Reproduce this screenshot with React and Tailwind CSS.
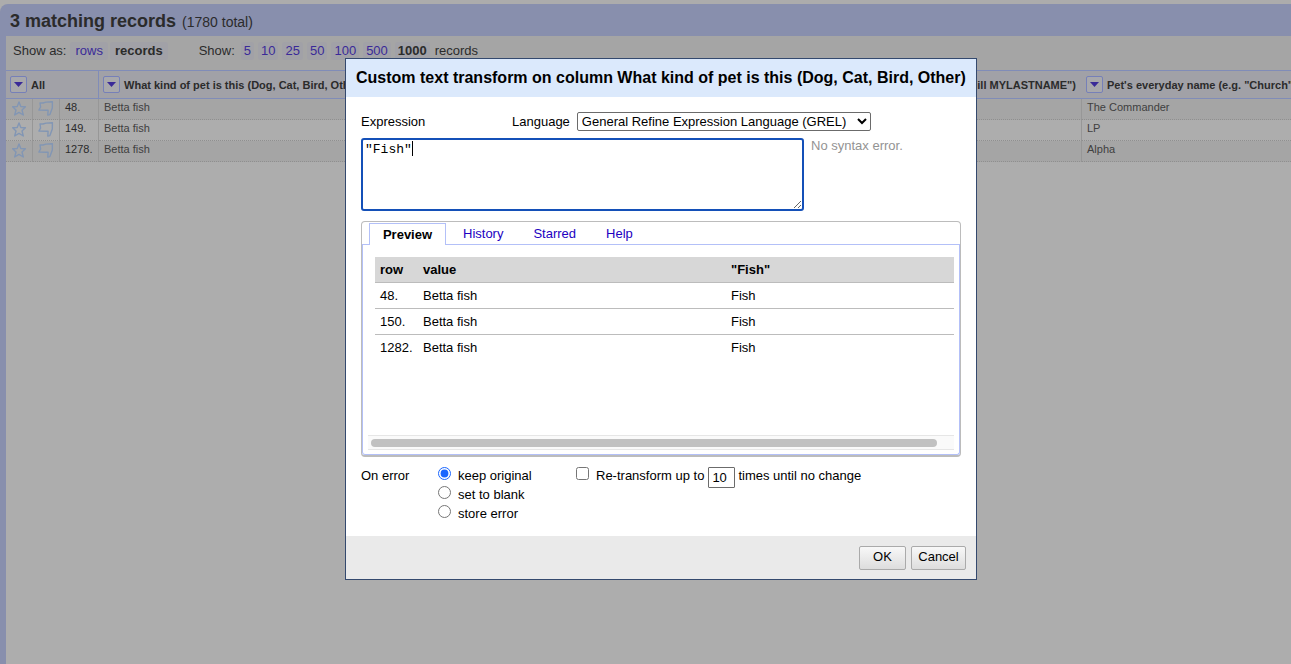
import React from "react";

const sizes = ["5", "10", "25", "50", "100", "500"];

const records = [
  { index: "48.", kind: "Betta fish", name: "The Commander", bg: "bg-[#a5a5a5]" },
  { index: "149.", kind: "Betta fish", name: "LP", bg: "bg-[#adadad]" },
  { index: "1278.", kind: "Betta fish", name: "Alpha", bg: "bg-[#a5a5a5]" },
];

const preview = [
  { row: "48.", value: "Betta fish", result: "Fish" },
  { row: "150.", value: "Betta fish", result: "Fish" },
  { row: "1282.", value: "Betta fish", result: "Fish" },
];

function MenuButton({ label }) {
  return (
    <button
      type="button"
      aria-label={label}
      className="flex h-[17px] w-[17px] shrink-0 items-center justify-center rounded-[2px] border border-[#7680b8] bg-[#a8a8ac]"
    >
      <svg width="9" height="5" viewBox="0 0 9 5">
        <path d="M0 0H9L4.5 5Z" fill="#3a2a98" />
      </svg>
    </button>
  );
}

function StarIcon() {
  return (
    <svg width="15" height="15" viewBox="0 0 15 15" fill="none" stroke="#8296b4" strokeWidth="1.4" strokeLinejoin="round">
      <path d="M7 1L8.8 5.6L13.4 5.8L10 9L11.3 14L7 11.4L2.7 14L4 9L.7 5.8L5.2 5.6Z" />
    </svg>
  );
}

function FlagIcon() {
  return (
    <svg width="16" height="15" viewBox="0 0 16 15" fill="none" stroke="#8296b4" strokeWidth="1.4" strokeLinejoin="round">
      <path d="M2 2L5 2L8 1.1L14.4 .8L14.3 7L11.9 13.6L9.8 14L10.1 9.2L.9 9.1L2.6 6Z" />
    </svg>
  );
}

function HeadCell({ label, children }) {
  return (
    <div className="flex h-[27px] items-center gap-1 pl-1">
      <MenuButton label={label} />
      <span className="whitespace-nowrap pt-[2px]">{children}</span>
    </div>
  );
}

function RecordsPage() {
  const head = "border-y border-[#808cb8] p-0 text-left font-bold";
  const cell = "h-[21px] border-b border-[#8f8f8f] p-0 [border-bottom-style:dotted]";
  const divided = "border-r border-r-[#979797]";
  return (
    <main className="min-h-screen pt-1">
      <div className="min-h-[660px] rounded-tl-lg bg-[#888fad] pl-[6px]">
        <h1 className="flex h-8 items-baseline gap-[6px] pl-1 text-[18px] font-bold leading-[34px]">
          3 matching records <span className="text-[14px] font-normal">(1780 total)</span>
        </h1>
        <div className="min-h-[628px] bg-[#adadad]">
          <div className="flex h-[34px] items-start bg-[#a5a5a5] pl-[7px] pt-[6px] text-[13px] leading-[18px]">
            <span>Show as:</span>
            <a href="#rows" className="ml-1 rounded-[3px] bg-[#a1a1a7] px-[5px] text-[#3a2a98]">rows</a>
            <span className="ml-[2px] rounded-[3px] bg-[#a1a1a7] px-[5px] font-bold">records</span>
            <span className="ml-[31px]">Show:</span>
            <div className="ml-[6px] flex gap-1">
              {sizes.map((n) => (
                <a key={n} href="#size" className="rounded-[3px] bg-[#a1a1a7] px-[3px] text-[#3a2a98]">{n}</a>
              ))}
              <span className="rounded-[3px] bg-[#a1a1a7] px-[3px] font-bold">1000</span>
            </div>
            <span className="ml-[5px]">records</span>
          </div>
          <table className="w-full table-fixed border-separate border-spacing-0 text-[11px] leading-[13px]">
            <colgroup>
              <col className="w-[27px]" />
              <col className="w-[27px]" />
              <col className="w-[39px]" />
              <col className="w-[290px]" />
              <col />
              <col className="w-[209px]" />
            </colgroup>
            <thead className="bg-[#a1a1a7]">
              <tr>
                <th colSpan={3} className={`${head} border-r`}><HeadCell label="All menu">All</HeadCell></th>
                <th className={`${head} overflow-hidden border-r`}>
                  <HeadCell label="Pet kind menu">What kind of pet is this (Dog, Cat, Bird, Other)</HeadCell>
                </th>
                <th className="overflow-hidden whitespace-nowrap border-y border-[#808cb8] pb-0 pl-0 pr-[6px] pt-[2px] text-right font-bold">
                  ill MYLASTNAME")
                </th>
                <th className={`${head} overflow-hidden`}>
                  <HeadCell label="Everyday name menu">Pet's everyday name (e.g. "Church"</HeadCell>
                </th>
              </tr>
            </thead>
            <tbody>
              {records.map((r) => (
                <tr key={r.index} className={r.bg}>
                  <td className={`${cell} ${divided}`}>
                    <div className="flex justify-center pb-px"><StarIcon /></div>
                  </td>
                  <td className={`${cell} ${divided}`}>
                    <div className="flex justify-center pb-px"><FlagIcon /></div>
                  </td>
                  <td className={`${cell} ${divided}`}>
                    <div className="pb-[3px] pl-[5px]">{r.index}</div>
                  </td>
                  <td className={cell}><div className="pb-[3px] pl-[5px] text-[#404040]">{r.kind}</div></td>
                  <td className={`${cell} ${divided}`} />
                  <td className={cell}><div className="pb-[3px] pl-[5px] text-[#404040]">{r.name}</div></td>
                </tr>
              ))}
            </tbody>
          </table>
        </div>
      </div>
    </main>
  );
}

function TransformDialog() {
  const button =
    "h-6 rounded-[2px] border border-[#aaaaaa] bg-gradient-to-b from-[#f8f8f8] to-[#dddddd] pb-[2px] text-[13px] leading-5";
  const line = "h-[26px] border-b border-[#bcbcbc] p-0 pl-[5px]";
  return (
    <div className="fixed inset-0 flex items-start justify-center pl-[31px] pt-[58px]">
      <section
        role="dialog"
        aria-labelledby="dialog-title"
        className="w-[632px] border border-[#34496e] bg-white text-[13px] leading-[19px] text-black"
      >
        <h2 id="dialog-title" className="whitespace-nowrap bg-[#dbe9fc] px-[10px] text-[16px] font-bold leading-[38px]">
          Custom text transform on column What kind of pet is this (Dog, Cat, Bird, Other)
        </h2>
        <div className="px-[15px] pb-[13px] pt-[15px]">
          <div className="flex items-center">
            <label htmlFor="expression" className="w-[151px]">Expression</label>
            <label htmlFor="language">Language</label>
            <select
              id="language"
              defaultValue="grel"
              className="ml-[7px] h-[19px] w-[294px] rounded-[2px] border border-[#6b6b6b] bg-white text-[13px] leading-4"
            >
              <option value="grel">General Refine Expression Language (GREL)</option>
            </select>
          </div>
          <div className="mt-[7px] flex items-start gap-[7px]">
            <div className="relative">
              <textarea
                id="expression"
                spellCheck={false}
                defaultValue={'"Fish"'}
                className="block h-[73px] w-[443px] rounded-[3px] border-2 border-[#1450b8] px-[2px] py-[2px] font-['Liberation_Mono',monospace] text-[13px] leading-4 caret-transparent outline-none"
              />
              <span aria-hidden="true" className="absolute left-[51px] top-[3px] h-[15px] w-px bg-black" />
            </div>
            <div className="-mt-[2px] text-[#939393]">No syntax error.</div>
          </div>
          <div className="mt-[10px] rounded-[4px] border border-b-2 border-[#bcbcbc]">
            <div className="flex h-[23px] items-end border-b border-[#b3c0f8] pl-[7px]" role="tablist">
              <button type="button" role="tab" aria-selected="true" className="-mb-px h-[22px] w-[77px] border border-b-0 border-[#b3c0f8] bg-white font-bold leading-[19px]">
                Preview
              </button>
              <div className="ml-[17px] flex gap-[30px] pb-px text-[#2200c1]">
                <a href="#history" role="tab">History</a>
                <a href="#starred" role="tab">Starred</a>
                <a href="#help" role="tab">Help</a>
              </div>
            </div>
            <div className="flex h-[210px] flex-col justify-between rounded-b-[3px] border-x border-b border-[#b3c0f8] px-[5px] pb-1 pt-3">
              <div className="pl-[7px]">
                <table className="w-full table-fixed border-separate border-spacing-0 text-left">
                  <colgroup>
                    <col className="w-[43px]" />
                    <col className="w-[308px]" />
                    <col />
                  </colgroup>
                  <thead>
                    <tr className="bg-[#d7d7d7]">
                      <th className={line}>row</th>
                      <th className={line}>value</th>
                      <th className={line}>"Fish"</th>
                    </tr>
                  </thead>
                  <tbody className="[&>tr:last-child>td]:border-transparent">
                    {preview.map((p) => (
                      <tr key={p.row}>
                        <td className={line}>{p.row}</td>
                        <td className={line}>{p.value}</td>
                        <td className={line}>{p.result}</td>
                      </tr>
                    ))}
                  </tbody>
                </table>
              </div>
              <div className="flex h-[15px] items-center border-y border-[#e6e6e6] bg-[#fafafa] pl-[3px] pr-[17px]">
                <div className="h-2 w-full rounded-full bg-[#c1c1c1]" />
              </div>
            </div>
          </div>
          <div className="mt-[9px] flex items-start">
            <span className="w-[77px]" id="on-error">On error</span>
            <div role="radiogroup" aria-labelledby="on-error" className="w-[138px]">
              {["keep original", "set to blank", "store error"].map((label, i) => (
                <label key={label} className="flex items-start gap-[7px]">
                  <input type="radio" name="on-error" defaultChecked={i === 0} className="mt-px h-[13px] w-[13px] accent-[#1a66ff]" />
                  {label}
                </label>
              ))}
            </div>
            <input id="repeat" type="checkbox" className="mt-px h-[13px] w-[13px]" />
            <label htmlFor="repeat" className="ml-[7px]">Re-transform up to</label>
            <input
              aria-label="Repeat count"
              defaultValue="10"
              className="ml-1 mt-px h-[21px] w-[27px] rounded-[1px] border border-[#6b6b6b] px-[3px] text-[13px] leading-4"
            />
            <span className="ml-[3px]">times until no change</span>
          </div>
        </div>
        <footer className="flex h-[43px] justify-end gap-[5px] bg-[#eaeaea] pr-[10px] pt-[10px]">
          <button type="button" className={`${button} w-[47px]`}>OK</button>
          <button type="button" className={`${button} w-[55px]`}>Cancel</button>
        </footer>
      </section>
    </div>
  );
}

export default function App() {
  return (
    <div className="min-h-screen overflow-hidden bg-[#acacac] font-['Liberation_Sans',Arial,sans-serif] text-[#2b2b2b]">
      <RecordsPage />
      <TransformDialog />
    </div>
  );
}
